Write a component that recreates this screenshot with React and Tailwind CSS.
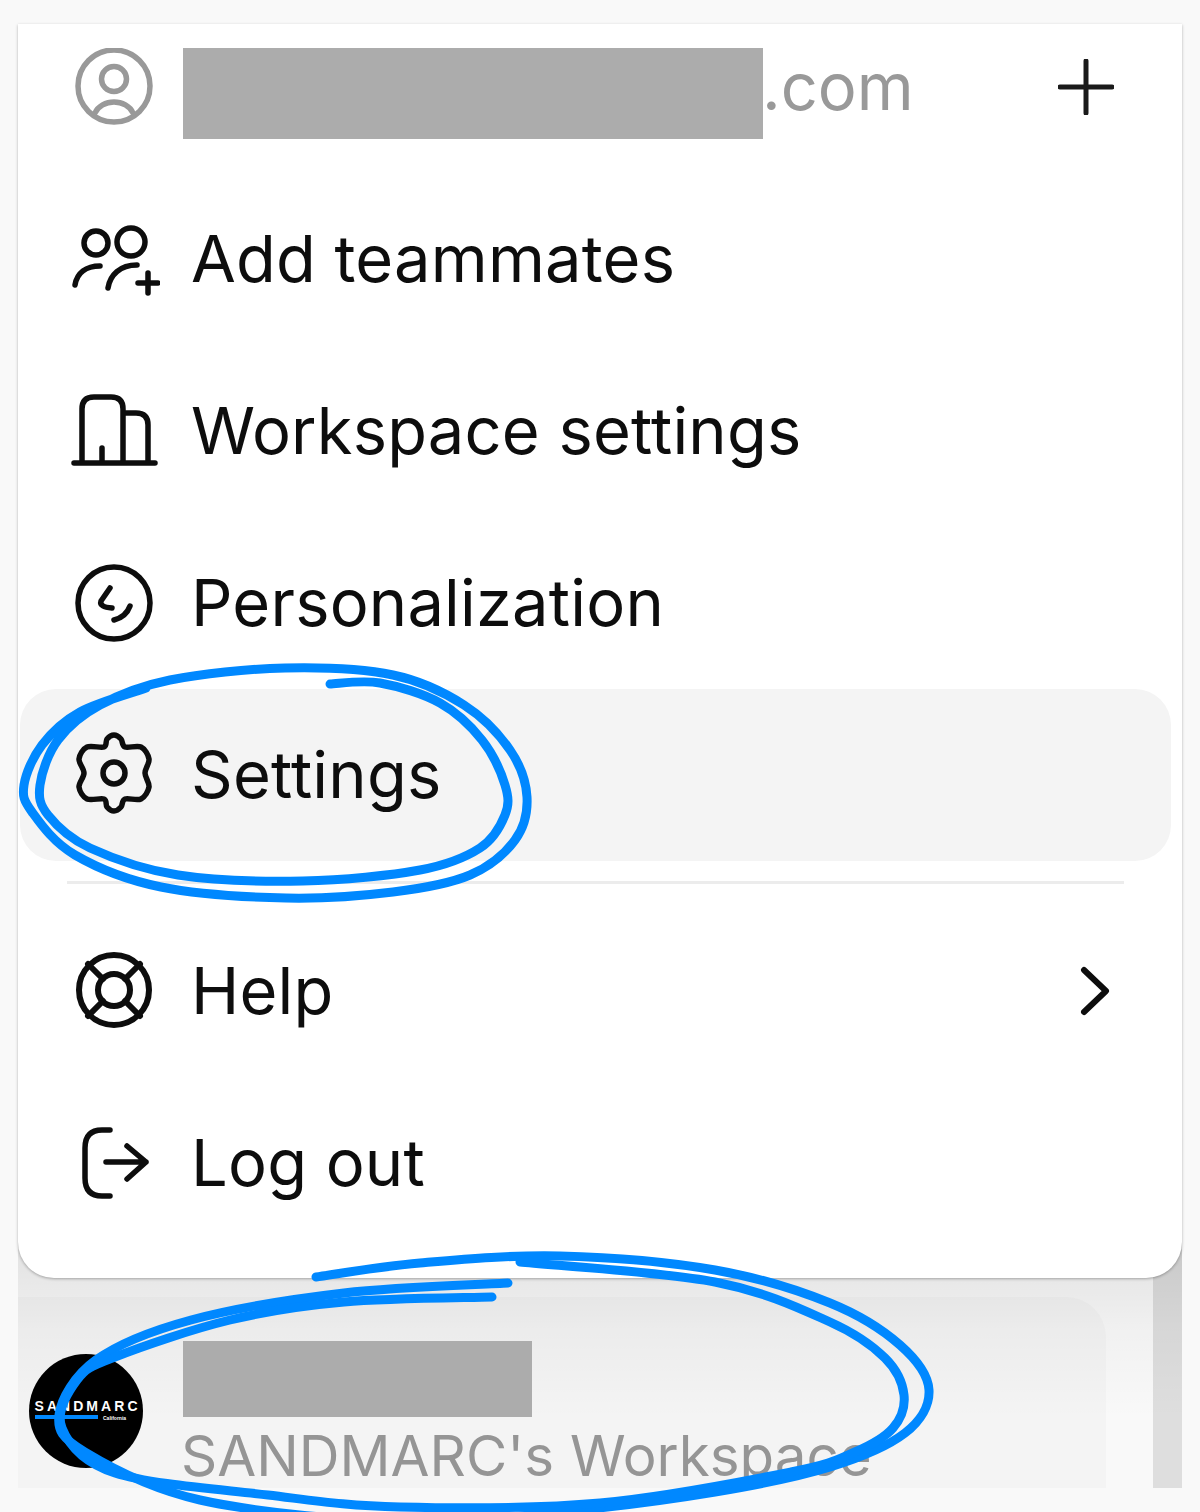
import React from "react";

const smooth = (p, closed = false) => {
  const n = p.length;
  const at = (i) => (closed ? p[(i + n) % n] : p[Math.max(0, Math.min(n - 1, i))]);
  let d = `M${p[0][0]} ${p[0][1]}`;
  const last = closed ? n : n - 1;
  for (let i = 0; i < last; i++) {
    const [a, b, c, e] = [at(i - 1), at(i), at(i + 1), at(i + 2)];
    d += ` C${(b[0] + (c[0] - a[0]) / 6).toFixed(1)} ${(b[1] + (c[1] - a[1]) / 6).toFixed(1)} ${(c[0] - (e[0] - b[0]) / 6).toFixed(1)} ${(c[1] - (e[1] - b[1]) / 6).toFixed(1)} ${c[0]} ${c[1]}`;
  }
  return d + (closed ? " Z" : "");
};

const Icon = ({ children, color = "#0d0d0d", width = 5.5 }) => (
  <svg viewBox="0 0 92 92" fill="none" stroke={color} strokeWidth={width} strokeLinecap="round" strokeLinejoin="round" className="w-[92px] h-[92px] shrink-0">
    {children}
  </svg>
);

const flower = [
  [36, 18], [39, 10], [46, 6], [53, 10], [57, 18], [73, 18], [81, 30], [77, 44], [81, 58], [73, 70], [57, 70], [53, 78], [46, 82], [39, 78],
  [36, 70], [19, 70], [11, 58], [16, 44], [11, 30], [19, 18],
];

const icons = {
  team: (
    <Icon>
      <circle cx="28" cy="30" r="12" />
      <circle cx="63" cy="29" r="14" />
      <path d="M7 72C9 60 18 53 32 53M40 75C42 62 52 52 69 52M80 60V80M70 70H90" />
    </Icon>
  ),
  workspace: (
    <Icon>
      <path d="M6 78H87M14 78V24Q14 12 26 12H43Q55 12 55 24V78M55 28H68Q80 28 80 40V78M34 78V63" />
    </Icon>
  ),
  personal: (
    <Icon>
      <circle cx="46" cy="46" r="36" />
      <path d="M42 31L33 44Q31 50 44 51M46 63Q58 60 62 49" />
    </Icon>
  ),
  settings: (
    <Icon>
      <path d={smooth(flower, true)} />
      <circle cx="46" cy="44" r="11" />
    </Icon>
  ),
  help: (
    <Icon width={6}>
      <circle cx="46" cy="45" r="35" />
      <circle cx="46" cy="45" r="16" />
      <path d="M20 19L35 34M72 19L57 34M20 71L35 56M72 71L57 56" />
    </Icon>
  ),
  logout: (
    <Icon>
      <path d="M42 13H34Q17 13 17 31V61Q17 79 34 79H42M38 45H78M59 29L78 45L59 62" />
    </Icon>
  ),
};

const Row = ({ icon, label, active, right }) => (
  <div className={`flex items-center h-[172px] ml-[2px] mr-[11px] pl-[48px] pr-[61px] rounded-[36px] ${active ? "bg-[#f4f4f4]" : ""}`}>
    {icon}
    <span className="ml-[33px] text-[65px] tracking-[0.2px] leading-none text-[#0d0d0d] -translate-x-[2px] -translate-y-[1px]">{label}</span>
    {right}
  </div>
);

const settingsScribble = [
  [330, 684], [380, 683], [440, 703], [482, 740], [505, 785], [505, 815], [480, 848], [420, 870], [303, 881], [178, 875], [90, 848], [48, 815],
  [40, 785], [58, 740], [100, 705], [170, 680], [285, 668], [393, 675], [464, 705], [510, 750], [527, 797], [515, 840], [470, 875], [393, 892],
  [286, 898], [161, 887], [75, 855], [32, 812], [24, 785], [42, 745], [80, 712], [146, 688],
];
const lowerA = [
  [316, 1277], [420, 1263], [560, 1256], [715, 1270], [830, 1303], [900, 1345], [929, 1390], [905, 1433], [830, 1467], [715, 1492],
  [560, 1512], [400, 1522], [200, 1500], [85, 1452], [59, 1415], [96, 1360], [191, 1320], [344, 1293], [508, 1283],
];
const lowerB = [
  [520, 1262], [715, 1282], [830, 1322], [885, 1358], [904, 1395], [893, 1428], [855, 1452], [791, 1472], [600, 1503], [400, 1507], [268, 1495],
  [115, 1473], [62, 1428], [77, 1380], [115, 1357], [230, 1320], [344, 1302], [492, 1297],
];

export default function App() {
  return (
    <div className="relative w-[1200px] h-[1512px] overflow-hidden bg-[#f9f9f9] pt-[24px] px-[18px]" style={{ fontFamily: "Inter, 'Liberation Sans', sans-serif" }}>
      <div className="relative z-10 h-[1254px] bg-white rounded-b-[36px] overflow-hidden shadow-[0_1px_3px_rgba(0,0,0,0.3)]">
        <div className="flex items-start h-[149px] pt-[24px] pl-[50px] pr-[68px]">
          <Icon color="#999999">
            <circle cx="46" cy="38" r="36" />
            <circle cx="46" cy="31" r="12.5" />
            <path d="M27 65C30 58 38 54 46 54S62 58 65 65" />
          </Icon>
          <div className="ml-[23px] w-[580px] h-[91px] bg-[#acacac] shrink-0" />
          <span className="-ml-[1px] mt-[6px] text-[65px] leading-none text-[#999999]">.com</span>
          <svg viewBox="0 0 56 56" fill="none" stroke="#1a1a1a" strokeWidth="5" strokeLinecap="round" className="ml-auto mt-[11px] w-[56px] h-[56px]">
            <path d="M28 2V54M2 28H54" />
          </svg>
        </div>
        <Row icon={icons.team} label="Add teammates" />
        <Row icon={icons.workspace} label="Workspace settings" />
        <Row icon={icons.personal} label="Personalization" />
        <Row icon={icons.settings} label="Settings" active />
        <div className="mt-[20px] mb-[21px] ml-[49px] mr-[58px] h-[3px] bg-[#ececec]" />
        <Row
          icon={icons.help}
          label="Help"
          right={
            <svg viewBox="0 0 30 50" fill="none" stroke="#0d0d0d" strokeWidth="6" strokeLinecap="round" strokeLinejoin="round" className="ml-auto w-[30px] h-[50px]">
              <path d="M4 4L26 25L4 46" />
            </svg>
          }
        />
        <Row icon={icons.logout} label="Log out" />
      </div>

      <div className="relative flex -mt-[40px] h-[250px]">
        <div className="w-[1088px] mt-[59px] h-[191px] bg-[#f4f4f4] rounded-tr-[40px] flex items-start pt-[44px] pl-[11px] shrink-0">
          <svg viewBox="0 0 114 114" className="w-[114px] h-[114px] mt-[13px] shrink-0">
            <circle cx="57" cy="57" r="57" fill="#000" />
            <text x="57" y="57" textAnchor="middle" fill="#fff" fontSize="14" fontWeight="600" fontFamily="'Liberation Sans', sans-serif" textLength="103">SANDMARC</text>
            <rect x="6" y="61" width="63" height="4" fill="#0088ff" />
            <text x="74" y="66" fill="#fff" fontSize="5" fontWeight="700" fontFamily="'Liberation Sans', sans-serif">California</text>
          </svg>
          <div className="ml-[40px] flex flex-col">
            <div className="relative z-10 w-[349px] h-[76px] bg-[#acacac]" />
            <span className="mt-[8px] -ml-[2px] text-[56.5px] leading-[62px] text-[#959595] whitespace-nowrap">SANDMARC's Workspace</span>
          </div>
        </div>
        <div className="ml-[47px] w-[29px] bg-[#dedede]" />
        <div className="absolute inset-x-0 top-0 h-[180px] bg-gradient-to-b from-black/10 via-black/[0.035] to-transparent" />
      </div>

      <svg viewBox="0 0 1200 1512" fill="none" stroke="#0088ff" strokeWidth="9" strokeLinecap="round" strokeLinejoin="round" className="absolute inset-0 z-20 w-[1200px] h-[1512px] pointer-events-none">
        <path d={smooth(settingsScribble)} />
        <path d={smooth(lowerA)} />
        <path d={smooth(lowerB)} />
      </svg>
    </div>
  );
}
